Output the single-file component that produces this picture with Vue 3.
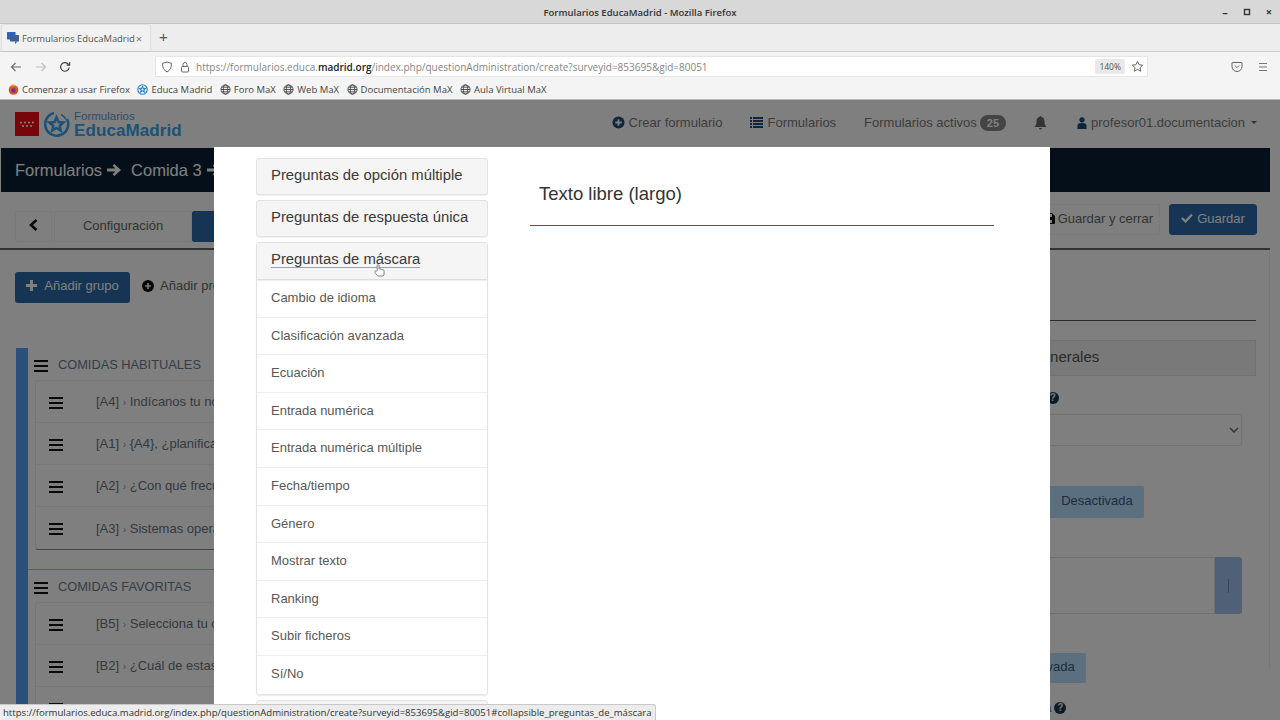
<script setup>
const bookmarks = [
  { label: 'Educa Madrid', kind: 'educa' },
  { label: 'Foro MaX', kind: 'globe' },
  { label: 'Web MaX', kind: 'globe' },
  { label: 'Documentación MaX', kind: 'globe' },
  { label: 'Aula Virtual MaX', kind: 'globe' }
]
const groupA = [
  { code: '[A4]', text: 'Indícanos tu nombre' },
  { code: '[A1]', text: '{A4}, ¿planificas tus comidas?' },
  { code: '[A2]', text: '¿Con qué frecuencia comes fuera?' },
  { code: '[A3]', text: 'Sistemas operativos' }
]
const groupB = [
  { code: '[B5]', text: 'Selecciona tu comida' },
  { code: '[B2]', text: '¿Cuál de estas prefieres?' },
  { code: '[B4]', text: '¿Cuánto te gusta?' }
]
const maskItems = ['Cambio de idioma', 'Clasificación avanzada', 'Ecuación', 'Entrada numérica', 'Entrada numérica múltiple', 'Fecha/tiempo', 'Género', 'Mostrar texto', 'Ranking', 'Subir ficheros', 'Sí/No']
</script>

<template>
  <div class="screen">
    <header class="titlebar">
      <span class="title">Formularios EducaMadrid - Mozilla Firefox</span>
      <div class="winbtns">
        <span class="wb">–</span>
        <svg width="8" height="8" viewBox="0 0 8 8"><rect x="1.500" y="1.500" width="5" height="5" fill="none" stroke="#333" stroke-width="1.400"/></svg>
        <span class="wb">×</span>
      </div>
    </header>

    <div class="tabstrip">
      <div class="tab">
        <svg class="fav" width="12" height="12" viewBox="0 0 12 12"><rect x="0" y="0" width="8.500" height="7.500" rx=".5" fill="#2a62c4"/><rect x="3" y="3" width="9" height="6.500" rx=".5" fill="#3f5e96"/><path d="M8 9.500v2.500l2.500-2.500z" fill="#3f5e96"/></svg>
        <span class="tabtext">Formularios EducaMadrid</span>
        <span class="tabx">×</span>
      </div>
      <span class="newtab">+</span>
    </div>

    <div class="navrow">
      <div class="navbtns">
        <svg width="12" height="12" viewBox="0 0 12 12" fill="none" stroke="#666" stroke-width="1.100"><path d="M11 6H1.500M5.500 2L1.500 6l4 4"/></svg>
        <svg width="12" height="12" viewBox="0 0 12 12" fill="none" stroke="#bdbdbd" stroke-width="1.100"><path d="M1 6h9.500M6.500 2l4 4-4 4"/></svg>
        <svg width="12" height="12" viewBox="0 0 12 12" fill="none" stroke="#444" stroke-width="1.200"><path d="M10.200 6.500A4.300 4.300 0 1 1 8.800 2.700L10.400 4"/><path d="M10.600 1.200V4.200H7.700"/></svg>
      </div>
      <div class="urlbar">
        <svg class="ico" width="12" height="12" viewBox="0 0 12 12" fill="none" stroke="#666" stroke-width="1"><path d="M6 1l4.500 1.400c0 4-1.200 6.900-4.500 8.600C2.700 9.300 1.500 6.400 1.500 2.400z"/></svg>
        <svg class="ico" width="12" height="12" viewBox="0 0 12 12" fill="none" stroke="#666" stroke-width="1"><rect x="2.500" y="5.500" width="7" height="5.500" rx="1"/><path d="M4 5.500V3.500a2 2 0 0 1 4 0v2"/></svg>
        <span class="url">https://formularios.educa.<b>madrid.org</b>/index.php/questionAdministration/create?surveyid=853695&amp;gid=80051</span>
        <span class="zoomchip">140%</span>
        <svg class="ico" width="13" height="13" viewBox="0 0 24 24" fill="none" stroke="#666" stroke-width="1.800"><path d="M12 2.500l2.900 6.200 6.800.8-5 4.600 1.300 6.700-6-3.400-6 3.400 1.300-6.700-5-4.600 6.800-.8z"/></svg>
      </div>
      <div class="navright">
        <svg width="12" height="12" viewBox="0 0 12 12" fill="none" stroke="#666" stroke-width="1"><path d="M1.500 1.500h9a.5.5 0 0 1 .5.5v3.500a5 5 0 0 1-10 0V2a.5.5 0 0 1 .5-.5z"/><path d="M3.800 4.500L6 6.700l2.200-2.200"/></svg>
        <svg width="12" height="12" viewBox="0 0 12 12" stroke="#777" stroke-width="1"><path d="M2 2.500h8M2 6h8M2 9.500h8"/></svg>
      </div>
    </div>

    <div class="bookmarks">
      <span class="bm">
        <svg width="11" height="11" viewBox="0 0 11 11"><circle cx="5.500" cy="6" r="4.800" fill="#d9532c"/><circle cx="5.500" cy="6.500" r="2.200" fill="#7a2d8c"/><path d="M2 2l3-2 3 1.500-2 1z" fill="#f5a623"/></svg>
        Comenzar a usar Firefox
      </span>
      <span v-for="b in bookmarks" :key="b.label" class="bm">
        <svg v-if="b.kind === 'educa'" width="11" height="11" viewBox="0 0 11 11" fill="none" stroke="#2a80c9" stroke-width="1.100"><circle cx="5.500" cy="5.500" r="4.700"/><path d="M5.500 2.500l.9 2h2l-1.600 1.400.6 2.100-1.900-1.200-1.900 1.200.6-2.100L2.600 4.500h2z"/></svg>
        <svg v-else width="11" height="11" viewBox="0 0 11 11" fill="none" stroke="#444" stroke-width=".9"><circle cx="5.500" cy="5.500" r="4.600"/><ellipse cx="5.500" cy="5.500" rx="2.200" ry="4.600"/><path d="M1 5.500h9M1.600 3.200h7.800M1.600 7.800h7.800"/></svg>
        {{ b.label }}
      </span>
    </div>

    <div class="page">
      <nav class="topnav">
        <div class="logo">
          <svg class="flag" width="24" height="24" viewBox="0 0 24 24"><rect width="24" height="24" fill="#f00a14"/><g fill="#fff"><circle cx="6" cy="10.500" r="1.100"/><circle cx="10" cy="10.500" r="1.100"/><circle cx="14" cy="10.500" r="1.100"/><circle cx="18" cy="10.500" r="1.100"/><circle cx="8" cy="14" r="1.100"/><circle cx="12" cy="14" r="1.100"/><circle cx="16" cy="14" r="1.100"/></g></svg>
          <svg class="logomark" width="26" height="26" viewBox="0 0 26 26" fill="none" stroke="#3aa4ec" stroke-width="2.600"><path d="M10 2A11.500 11.500 0 1 0 23 8"/><path d="M17 3.500a11 11 0 0 1 5 5" stroke-width="1.500"/><path d="M12.500 6.500l2 4.500 5 .5-3.800 3.200 1 4.800-4.200-2.500-4.200 2.500 1-4.800L5.500 11.500l5-.5z"/></svg>
          <div class="logotext"><span class="lt1">Formularios</span><span class="lt2">EducaMadrid</span></div>
        </div>
        <div class="navlinks">
          <span class="nl">
            <svg class="ni" width="13" height="13" viewBox="0 0 14 14"><circle cx="7" cy="7" r="6.500" fill="#1e4a78"/><path d="M7 3.500v7M3.500 7h7" stroke="#fff" stroke-width="2"/></svg>
            Crear formulario
          </span>
          <span class="nl">
            <svg class="ni" width="13" height="11" viewBox="0 0 13 11" fill="#1e4a78"><path d="M0 0h2v2H0zM3 0h10v2H3zM0 3h2v2H0zM3 3h10v2H3zM0 6h2v2H0zM3 6h10v2H3zM0 9h2v2H0zM3 9h10v2H3z"/></svg>
            Formularios
          </span>
          <span class="nl">Formularios activos <span class="badge">25</span></span>
          <svg class="bell" width="13" height="14" viewBox="0 0 13 14" fill="#666"><path d="M6.500 0a1 1 0 0 1 1 1.100C9.600 1.600 10.500 3.300 10.500 5.500c0 3 1 4.300 2 5.500H.5c1-1.200 2-2.500 2-5.500C2.500 3.300 3.400 1.600 5.500 1.100A1 1 0 0 1 6.500 0zM5 12h3a1.500 1.500 0 0 1-3 0z"/></svg>
          <span class="nl">
            <svg class="ni" width="10" height="12" viewBox="0 0 10 12" fill="#1e4a78"><circle cx="5" cy="2.800" r="2.600"/><path d="M.5 12V8.500C.5 6.800 2 6 5 6s4.500.8 4.500 2.500V12z"/></svg>
            profesor01.documentacion <span class="caret"></span>
          </span>
        </div>
      </nav>

      <div class="crumbs">
        <span>Formularios</span>
        <svg class="arrow" width="14" height="14" viewBox="0 0 14 14" fill="#fff"><path d="M7.300 1L14 7l-6.700 6-1.700-1.700 2.800-2.800H0v-3h8.400L5.600 2.700z"/></svg>
        <span class="crumb2">Comida 3</span>
        <svg class="arrow second" width="14" height="14" viewBox="0 0 14 14" fill="#fff"><path d="M7.300 1L14 7l-6.700 6-1.700-1.700 2.800-2.800H0v-3h8.400L5.600 2.700z"/></svg>
      </div>

      <div class="toolbar">
        <div class="tools-left">
          <span class="tbtn back"><svg width="9" height="12" viewBox="0 0 9 12" fill="none" stroke="#111" stroke-width="2.600"><path d="M7.500 1L2 6l5.500 5"/></svg></span>
          <span class="tbtn config">Configuración</span>
          <span class="tbtn structure"></span>
        </div>
        <div class="tools-right">
          <span class="tbtn close">
            <svg width="10" height="11" viewBox="0 0 10 11" fill="#111"><path d="M0 1a1 1 0 0 1 1-1h6l3 3v7a1 1 0 0 1-1 1H1a1 1 0 0 1-1-1zM2 1v3h5V1zM3 7v3h4V7z"/></svg>
            Guardar y cerrar
          </span>
          <span class="tbtn save">
            <svg width="12" height="10" viewBox="0 0 12 10" fill="none" stroke="#fff" stroke-width="2.400"><path d="M1 5l3.500 3.500L11 1.500"/></svg>
            Guardar
          </span>
        </div>
      </div>

      <div class="workspace">
        <section class="leftpane">
          <div class="addrow">
            <span class="addgroup"><svg width="11" height="11" viewBox="0 0 11 11" fill="#fff"><path d="M4 0h3v4h4v3H7v4H4V7H0V4h4z"/></svg> Añadir grupo</span>
            <span class="addq"><svg width="12" height="12" viewBox="0 0 14 14"><circle cx="7" cy="7" r="7" fill="#111"/><path d="M7 3.500v7M3.500 7h7" stroke="#eee" stroke-width="2"/></svg> Añadir pregunta</span>
          </div>
          <div class="tree">
            <div class="group">
              <div class="grouphead"><span class="burger"><i></i><i></i><i></i></span>COMIDAS HABITUALES</div>
              <div class="qcard">
                <div v-for="q in groupA" :key="q.code" class="qrow"><span class="burger"><i></i><i></i><i></i></span><span class="qtext">{{ q.code }} <small>›</small> {{ q.text }}</span></div>
              </div>
            </div>
            <div class="group second">
              <div class="grouphead"><span class="burger"><i></i><i></i><i></i></span>COMIDAS FAVORITAS</div>
              <div class="qcard">
                <div v-for="q in groupB" :key="q.code" class="qrow"><span class="burger"><i></i><i></i><i></i></span><span class="qtext">{{ q.code }} <small>›</small> {{ q.text }}</span></div>
              </div>
            </div>
          </div>
        </section>

        <section class="rightpane">
          <div class="paneltitle">Ajustes generales</div>
          <div class="fields">
            <div class="label">Tipo de pregunta <span class="help">?</span></div>
            <div class="select"><svg width="10" height="7" viewBox="0 0 10 7" fill="none" stroke="#666" stroke-width="1.500"><path d="M1 1l4 4 4-4"/></svg></div>
            <div class="toggle"><span class="on wide">Activada</span><span class="off">Desactivada</span></div>
            <div class="areawrap"><div class="area"></div><div class="areabtn"><i></i></div></div>
            <div class="toggle second"><span class="on narrow">Sí</span><span class="off">Desactivada</span></div>
            <div class="label last">Pregunta obligatoria <span class="help">?</span></div>
          </div>
        </section>
      </div>

      <div class="backdrop"></div>

      <div class="modal">
        <div class="accordion">
          <div class="panelhead">Preguntas de opción múltiple</div>
          <div class="panelhead">Preguntas de respuesta única</div>
          <div class="panelopen">
            <div class="panelhead inner">
              <span class="underlined">Preguntas de máscara</span>
              <svg class="cursor" width="11" height="13" viewBox="0 0 12 14" fill="#fff" stroke="#666" stroke-width=".9"><path d="M3.500 7V1.700a1 1 0 0 1 2 0V5l4 1c.9.2 1.500.8 1.500 1.700V11a2 2 0 0 1-2 2H5a2 2 0 0 1-1.600-.8L1 9c-.6-1 .6-2 1.500-1.200z"/></svg>
            </div>
            <div v-for="m in maskItems" :key="m" class="item">{{ m }}</div>
          </div>
          <div class="panelhead tail"></div>
        </div>
        <div class="preview">
          <h2 class="ptitle">Texto libre (largo)</h2>
          <div class="prule"></div>
        </div>
      </div>

      <div class="statustip">https://formularios.educa.madrid.org/index.php/questionAdministration/create?surveyid=853695&amp;gid=80051#collapsible_preguntas_de_máscara</div>
    </div>
  </div>
</template>

<style>
html, body { margin: 0; padding: 0; overflow: hidden; }
</style>

<style scoped>
.screen { width: 1280px; height: 720px; display: flex; flex-direction: column; overflow: hidden; font-family: "Liberation Sans", Arial, sans-serif; background: #fff; }
.titlebar { height: 24px; box-sizing: border-box; padding-top: 1px; background: #d8d8d8; border-bottom: 1px solid #c4c4c4; display: flex; align-items: center; justify-content: center; position: relative; font-family: "Open Sans", sans-serif; font-size: 9.500px; font-weight: 600; color: #333; }
.winbtns { position: absolute; right: 8px; top: 7px; display: flex; gap: 15px; align-items: center; }
.wb { font-size: 11px; line-height: 9px; font-weight: 700; color: #333; }
.tabstrip { height: 28px; background: #ededed; border-bottom: 1px solid #cfcfcf; box-sizing: border-box; display: flex; align-items: flex-end; padding-left: 2px; }
.tab { width: 148px; height: 26px; box-sizing: border-box; background: #f1f1f1; border-radius: 3px 3px 0 0; box-shadow: 0 0 2px rgba(0,0,0,.2); display: flex; align-items: center; padding-left: 5px; font-family: "Open Sans", sans-serif; font-size: 9.400px; color: #555; white-space: nowrap; }
.fav { flex: none; margin-right: 3px; }
.tabx { color: #777; font-size: 11px; margin-left: 1px; }
.newtab { margin-left: 9px; margin-bottom: 5px; font-size: 15px; line-height: 18px; color: #555; }
.navrow { height: 29px; background: #f4f4f4; display: flex; align-items: center; box-sizing: border-box; padding-left: 10px; }
.navbtns { display: flex; gap: 12.500px; width: 145px; }
.navbtns svg { flex: none; }
.urlbar { width: 993px; height: 21px; background: #fff; border: 1px solid #e6e6e6; box-sizing: border-box; display: flex; align-items: center; padding: 0 3px 0 5px; gap: 6px; }
.ico { flex: none; }
.url { flex: 1; margin-left: -1px; padding-top: 1px; font-family: "Open Sans", sans-serif; font-size: 10px; color: #858585; white-space: nowrap; }
.url b { color: #222; font-weight: 600; }
.zoomchip { background: #e9e9e9; font-family: "Open Sans", sans-serif; font-size: 8.500px; color: #555; padding: 2px 4px; border-radius: 2px; }
.navright { flex: 1; display: flex; justify-content: flex-end; gap: 14px; padding-right: 11px; }
.bookmarks { height: 19px; background: #f4f4f4; border-bottom: 1px solid #bbb; box-sizing: border-box; display: flex; align-items: center; padding: 0 0 1px 8px; gap: 7.500px; font-family: "Open Sans", sans-serif; font-size: 9.500px; color: #444; white-space: nowrap; }
.bm { display: inline-flex; align-items: center; gap: 3px; }
.page { position: relative; flex: 1; min-height: 0; background: #fff; overflow: hidden; }
.topnav { height: 48px; box-sizing: border-box; display: flex; justify-content: space-between; align-items: center; padding: 0 23px 3px 15px; color: #777; }
.logo { display: flex; align-items: center; gap: 4px; margin-top: 3px; }
.flag { flex: none; }
.logomark { flex: none; margin-left: 1px; }
.logotext { display: flex; flex-direction: column; line-height: 14px; margin-top: -1px; }
.lt1 { font-size: 11.500px; color: #5a9ad0; }
.lt2 { font-size: 17px; line-height: 15px; font-weight: 700; color: #3aa4ec; letter-spacing: .1px; }
.navlinks { display: flex; align-items: center; font-size: 13px; color: #7a7a7a; }
.nl { display: inline-flex; align-items: center; gap: 4px; margin-right: 28px; white-space: nowrap; }
.nl:last-child { margin-right: 0; }
.ni { flex: none; }
.badge { background: #888; color: #fff; font-size: 11px; font-weight: 700; border-radius: 10px; padding: 2px 7px; margin-left: -1px; }
.bell { margin-right: 30px; flex: none; }
.caret { width: 0; height: 0; border: 3.500px solid transparent; border-top-color: #666; border-bottom: 0; margin-left: 2px; }
.crumbs { height: 44px; width: 1269px; margin-left: 1px; background: #0b1f33; color: #fff; display: flex; align-items: center; padding-left: 14px; box-sizing: border-box; font-size: 16.500px; }
.arrow { flex: none; margin-left: 5px; }
.crumb2 { margin-left: 10px; }
.toolbar { width: 1270px; height: 58px; box-sizing: border-box; padding: 12px 13px 0 15px; display: flex; justify-content: space-between; align-items: flex-start; border-bottom: 2px solid #666; }
.tools-left { display: flex; gap: 2px; margin-top: 7px; }
.tools-right { display: flex; gap: 9px; }
.tbtn { height: 31px; box-sizing: border-box; display: inline-flex; align-items: center; justify-content: center; gap: 4px; font-size: 13px; color: #666; border: 1px solid #f4f4f4; border-radius: 2px; background: #fff; padding-bottom: 3px; }
.back { width: 37px; }
.config { width: 138px; }
.structure { width: 200px; margin-left: -2px; background: #2c6aa8; border-color: #2c6aa8; }
.close { width: 150px; border-left: 0; justify-content: flex-end; padding-right: 6px; gap: 3px; }
.save { width: 88px; background: #2c6aa8; border-color: #2c6aa8; color: #fff; border-radius: 3px; }
.workspace { display: flex; justify-content: space-between; width: 1270px; border-right: 1px solid #eee; box-sizing: border-box; height: 420px; }
.leftpane { width: 600px; padding-left: 15px; box-sizing: border-box; }
.addrow { display: flex; align-items: center; gap: 12px; margin-top: 22px; font-size: 13px; }
.addgroup { width: 115px; height: 31px; box-sizing: border-box; background: #2c6aa8; color: #fff; border-radius: 3px; display: flex; align-items: center; justify-content: center; gap: 7px; padding-bottom: 4px; }
.addq { color: #666; display: inline-flex; align-items: center; gap: 6px; padding-bottom: 4px; }
.tree { margin-top: 45px; margin-left: 1px; border-left: 12px solid #549ef0; }
.group { padding: 1px 0 19px 0; }
.group.second { border-top: 1px solid #9cc4ee; }
.grouphead { height: 31px; display: flex; align-items: center; gap: 10px; padding-left: 6px; font-size: 12.800px; color: #6a7c90; box-sizing: border-box; }
.burger { display: flex; flex-direction: column; gap: 3px; width: 14px; flex: none; padding-top: 2px; }
.burger i { display: block; height: 2px; background: #111; }
.qcard { margin-left: 7px; border: 1px solid #ededed; border-bottom-color: #888; border-radius: 3px; }
.qrow { height: 42px; display: flex; align-items: center; padding-left: 13px; box-sizing: border-box; font-size: 13px; color: #6a7280; border-bottom: 1px solid #f0f0f0; white-space: nowrap; }
.qrow:last-child { border-bottom: 0; }
.qtext { margin-left: 33px; }
.qtext small { font-size: 10px; color: #999; }
.rightpane { width: 326px; padding-top: 70px; margin-right: 13px; }
.paneltitle { height: 36px; margin-top: 20px; border: 1px solid #e5e5e5; background: #f3f3f3; font-size: 15px; color: #555; display: flex; align-items: center; padding: 0 0 3px 49px; white-space: nowrap; box-sizing: border-box; position: relative; }
.paneltitle::before { content: ""; position: absolute; left: -1px; right: -1px; top: -21px; height: 1px; background: #555; }
.fields { padding: 0 14px 0 18px; }
.label { height: 21px; margin-top: 11px; margin-left: -2px; display: flex; align-items: center; gap: 3px; font-size: 13px; white-space: nowrap; color: #666; }
.help { display: inline-flex; flex: none; width: 12px; height: 12px; border-radius: 50%; background: #1a3652; color: #eee; font-size: 10px; font-weight: 700; align-items: center; justify-content: center; }
.select { height: 30px; margin-top: 6px; border: 1px solid #e4e4e4; border-radius: 3px; display: flex; align-items: center; justify-content: flex-end; padding-right: 2px; }
.toggle { display: flex; margin-top: 40px; height: 32px; }
.toggle.second { margin-top: 39px; height: 30px; }
.on { background: #2c6aa8; color: #fff; font-size: 13px; display: flex; align-items: center; justify-content: center; }
.on.wide { width: 102px; }
.on.narrow { width: 44px; }
.off { width: 94px; flex: none; background: #b8dfff; color: #365a80; font-size: 13px; display: flex; align-items: center; justify-content: center; border-radius: 0 2px 2px 0; padding-bottom: 3px; box-sizing: border-box; }
.areawrap { display: flex; margin-top: 39px; height: 57px; }
.area { flex: 1; border: 1px solid #e0e0e0; }
.areabtn { width: 27px; background: #a0c0ec; border-radius: 0 3px 3px 0; display: flex; align-items: center; justify-content: center; }
.areabtn i { width: 1px; height: 14px; background: #7a90a8; }
.label.last { margin-top: 14px; margin-left: -13px; }
.backdrop { position: absolute; inset: 0; background: rgba(0,0,0,.5); }
.modal { position: absolute; left: 214px; top: 47px; width: 836px; height: 640px; background: #fff; display: flex; padding: 11px 56px 0 42px; box-sizing: border-box; }
.accordion { width: 232px; flex: none; display: flex; flex-direction: column; gap: 5px; }
.panelhead { height: 37px; box-sizing: border-box; background: #f5f5f5; border: 1px solid #e3e3e3; border-radius: 3px; padding: 8px 14px 0; font-size: 14.850px; color: #3a3a3a; box-shadow: 0 1px 1px rgba(0,0,0,.06); position: relative; white-space: nowrap; }
.panelopen { border: 1px solid #e3e3e3; border-radius: 3px; box-shadow: 0 1px 1px rgba(0,0,0,.08); }
.panelhead.inner { border: 0; border-bottom: 1px solid #ddd; border-radius: 0; }
.underlined { border-bottom: 1px solid #9aa4b0; }
.cursor { position: absolute; left: 117px; top: 21px; }
.item { height: 37.600px; box-sizing: border-box; border-bottom: 1px solid #eee; padding: 10px 14px 0; font-size: 13px; line-height: 16px; color: #585858; }
.item:last-child { border-bottom: 0; }
.preview { flex: 1; margin-left: 42px; padding-top: 25px; }
.ptitle { margin: 0; padding-left: 9px; font-weight: 400; font-size: 18.500px; line-height: 22px; color: #333; }
.prule { margin-top: 20px; height: 1px; background: #3a5a7c; }
.statustip { position: absolute; left: 0; bottom: 0; height: 16px; background: #ececec; border: 1px solid #c8c8c8; border-left: 0; border-bottom: 0; border-radius: 0 3px 0 0; box-sizing: border-box; padding: 1px 3px 0; font-family: "Open Sans", sans-serif; font-size: 9.580px; line-height: 14px; color: #333; white-space: nowrap; }
</style>
